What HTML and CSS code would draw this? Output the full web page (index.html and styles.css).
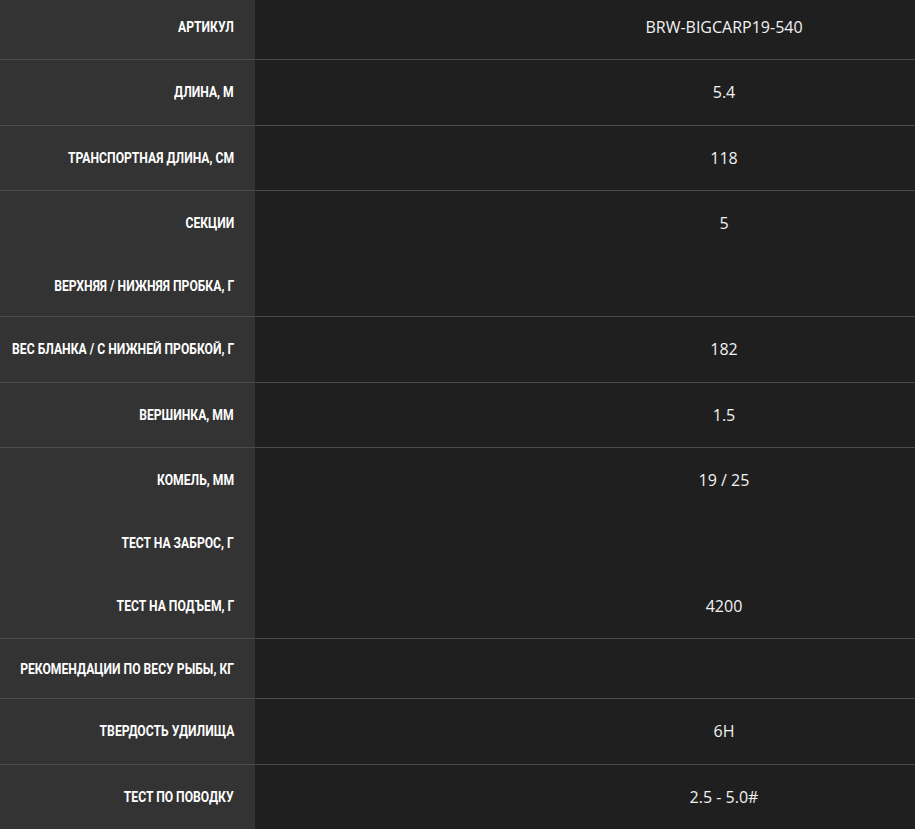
FILE: index.html
```html
<!DOCTYPE html>
<html lang="ru">
<head>
<meta charset="utf-8">
<link rel="stylesheet" href="styles.css">
</head>
<body>
<div class="specs">
  <div class="row first line"><div class="label"><span>АРТИКУЛ</span></div><div class="value">BRW-BIGCARP19-540</div></div>
  <div class="row line"><div class="label"><span>ДЛИНА, М</span></div><div class="value">5.4</div></div>
  <div class="row line"><div class="label"><span>ТРАНСПОРТНАЯ ДЛИНА, СМ</span></div><div class="value">118</div></div>
  <div class="row"><div class="label"><span>СЕКЦИИ</span></div><div class="value">5</div></div>
  <div class="row empty line"><div class="label"><span>ВЕРХНЯЯ / НИЖНЯЯ ПРОБКА, Г</span></div><div class="value"></div></div>
  <div class="row line"><div class="label"><span>ВЕС БЛАНКА / С НИЖНЕЙ ПРОБКОЙ, Г</span></div><div class="value">182</div></div>
  <div class="row line"><div class="label"><span>ВЕРШИНКА, ММ</span></div><div class="value">1.5</div></div>
  <div class="row"><div class="label"><span>КОМЕЛЬ, ММ</span></div><div class="value">19 / 25</div></div>
  <div class="row empty tall"><div class="label"><span>ТЕСТ НА ЗАБРОС, Г</span></div><div class="value"></div></div>
  <div class="row line"><div class="label"><span>ТЕСТ НА ПОДЪЕМ, Г</span></div><div class="value">4200</div></div>
  <div class="row empty short line"><div class="label"><span>РЕКОМЕНДАЦИИ ПО ВЕСУ РЫБЫ, КГ</span></div><div class="value"></div></div>
  <div class="row line"><div class="label"><span>ТВЕРДОСТЬ УДИЛИЩА</span></div><div class="value">6H</div></div>
  <div class="row last"><div class="label"><span>ТЕСТ ПО ПОВОДКУ</span></div><div class="value">2.5 - 5.0#</div></div>
</div>
</body>
</html>
```
FILE: styles.css
```css
html, body {
  margin: 0;
  padding: 0;
  background: #1f1f1f;
  overflow: hidden;
}
.specs {
  display: flex;
  flex-direction: column;
  margin-top: -5.5px;
}
.row {
  display: flex;
  height: 64.5px;
  flex-shrink: 0;
}
.row.empty {
  height: 60.5px;
}
.row.empty.tall {
  height: 61px;
}
.row.empty.short {
  height: 59px;
}
.row.last {
  height: 80px;
  align-items: flex-start;
}
.row.last .label,
.row.last .value {
  height: 64.5px;
}
.row.last .label {
  padding-bottom: 16px;
}
.row.line {
  border-bottom: 1px solid #4b4b4b;
}
.label {
  width: 234px;
  padding-right: 21px;
  background: #333333;
  color: #ffffff;
  font-family: "Roboto", sans-serif;
  font-weight: 700;
  font-size: 15px;
  display: flex;
  align-items: center;
  justify-content: flex-end;
}
.label span {
  display: inline-block;
  white-space: nowrap;
  transform: scaleX(0.81);
  transform-origin: right center;
}
.value {
  flex: 1;
  padding-left: 278px;
  color: #f2f2f2;
  font-family: "Open Sans", sans-serif;
  font-size: 16px;
  display: flex;
  align-items: center;
  justify-content: center;
}
```
